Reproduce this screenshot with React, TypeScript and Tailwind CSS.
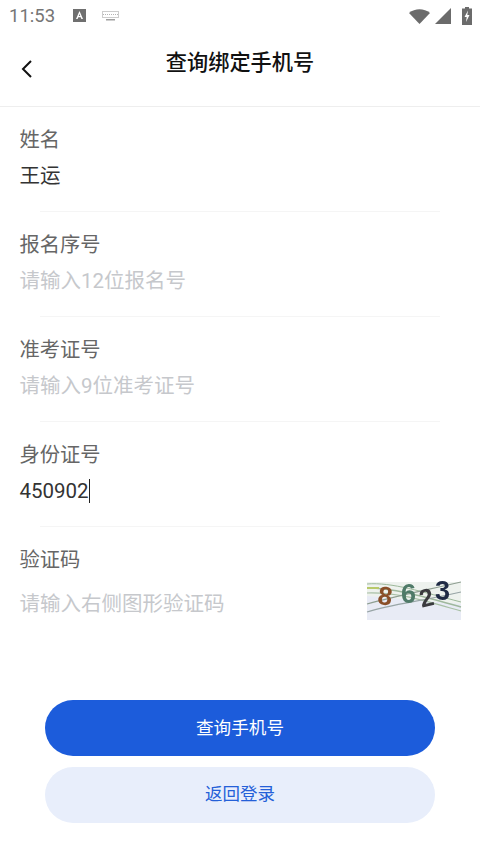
import React from "react";

const cjk = "font-['Roboto','Noto_Sans_CJK_SC',sans-serif]";

function Field({ label, value, placeholder, caret, line = true }: { label: string; value?: string; placeholder?: string; caret?: boolean; line?: boolean }) {
  return (
    <div className="h-[105px] pl-[19.5px] pr-5 pt-[18px] flex flex-col relative">
      <div className="text-[20.3px] leading-[30px] text-[#666666]">{label}</div>
      <div className={`mt-[6px] text-[20.5px] leading-[30px] flex items-center ${value ? "text-[#333333]" : "text-[#c6c8cc]"}`}>
        {value ?? placeholder}
        {caret && <span className="w-[1.5px] h-[24px] bg-[#222222] inline-block" />}
      </div>
      {line && <div className="absolute left-10 right-10 bottom-0 h-px bg-[#f5f5f5]" />}
    </div>
  );
}

function Captcha() {
  return (
    <svg width="94" height="40" viewBox="0 0 94 40" className="block overflow-visible blur-[0.4px]">
      <rect y="2" width="94" height="38" fill="#e8ebf5" />
      <path d="M0 2 H94 V24 L0 16 Z" fill="#eef2ee" />
      <path d="M0 4 C25 2 55 12 94 22" stroke="#9db89a" strokeWidth="1" fill="none" />
      <path d="M0 8 C28 8 58 17 94 27" stroke="#9fb89d" strokeWidth="1.4" fill="none" />
      <path d="M0 13 C30 12 55 20 94 31" stroke="#a9c0a6" strokeWidth="1.2" fill="none" />
      <path d="M0 24 C25 17 50 12 94 2" stroke="#8f9f92" strokeWidth="1.2" fill="none" />
      <path d="M0 32 C25 24 50 22 94 12" stroke="#98a5a6" strokeWidth="1.2" fill="none" />
      <path d="M0 8 H12" stroke="#b8c96a" strokeWidth="2" fill="none" />
      <text x="11" y="25" fontSize="26" fontWeight="700" fill="#8a4f28" transform="rotate(8 20 16)" fontFamily="'Liberation Sans',sans-serif">8</text>
      <text x="34" y="23" fontSize="27" fontWeight="700" fill="#4f7a68" fontFamily="'Liberation Sans',sans-serif">6</text>
      <text x="52" y="26" fontSize="25" fontWeight="700" fill="#3a3a3e" transform="rotate(-14 60 16)" fontFamily="'Liberation Sans',sans-serif">2</text>
      <text x="68" y="20" fontSize="27" fontWeight="700" fill="#1f2a44" fontFamily="'Liberation Sans',sans-serif">3</text>
    </svg>
  );
}

export default function App() {
  return (
    <div className={`w-[480px] h-[853px] bg-white overflow-hidden flex flex-col ${cjk}`}>
      <div className="h-[32px] flex items-center pl-[9px] pr-[8px] text-[#757575] shrink-0">
        <span className="text-[18.5px] leading-none font-['Roboto',sans-serif]">11:53</span>
        <svg width="14" height="14" viewBox="0 0 14 14" className="ml-[18px]">
          <rect width="13" height="13" fill="#6f6f6f" />
          <path d="M6.5 2 L3 10 H4.6 L5.3 8.2 H7.7 L8.4 10 H10 Z M5.8 6.9 L6.5 5 L7.2 6.9 Z" fill="#fff" />
        </svg>
        <svg width="17" height="11" viewBox="0 0 17 11" className="ml-[15px]">
          <rect x="0.5" y="0.5" width="16" height="6" fill="#ffffff" stroke="#9a9a9a" strokeDasharray="1 1" />
          <path d="M1 3.5 H16" stroke="#b5b5b5" strokeDasharray="1 1" />
          <rect x="4" y="8" width="9" height="1.5" fill="#a0a0a0" />
        </svg>
        <div className="ml-auto flex items-center gap-[4px]">
          <svg width="21" height="15" viewBox="0 0 21 15"><path d="M0 4 C6 -1 15 -1 21 4 L10.5 15 Z" fill="#6b6b6b" /></svg>
          <svg width="16" height="16" viewBox="0 0 16 16" className="ml-[1px]"><path d="M16 0 V16 H0 Z" fill="#6b6b6b" /></svg>
          <svg width="10" height="18" viewBox="0 0 10 18" className="ml-[7px]">
            <path d="M3 0 H7 V1.5 H10 V18 H0 V1.5 H3 Z" fill="#6b6b6b" />
            <path d="M6 3.5 L2.5 10 H4.7 L4 15 L7.5 8 H5.3 Z" fill="#fff" />
          </svg>
        </div>
      </div>

      <div className="h-[75px] border-b border-[#eeeeee] shrink-0 relative flex justify-center">
        <svg width="14" height="20" viewBox="0 0 14 20" className="absolute left-[20px] top-[27px]">
          <path d="M11 2 L3 10 L11 18" stroke="#111111" strokeWidth="2" fill="none" />
        </svg>
        <div className="text-[21.2px] leading-[30px] mt-[16px] font-medium text-[#111111]">查询绑定手机号</div>
      </div>

      <Field label="姓名" value="王运" />
      <Field label="报名序号" placeholder="请输入12位报名号" />
      <Field label="准考证号" placeholder="请输入9位准考证号" />
      <Field label="身份证号" value="450902" caret />

      <div className="pl-[19.5px] pr-[19px] pt-[18px] relative">
        <div className="text-[20.3px] leading-[30px] text-[#666666]">验证码</div>
        <div className="flex items-start justify-between mt-[5px]">
          <span className="text-[20.5px] leading-[30px] mt-[9px] text-[#c6c8cc]">请输入右侧图形验证码</span>
          <Captcha />
        </div>
      </div>

      <div className="mt-[80px] px-[45px] flex flex-col gap-[11px]">
        <div className="h-[56px] rounded-full bg-[#1c5cdb] text-white text-[17.6px] flex items-center justify-center">查询手机号</div>
        <div className="h-[56px] rounded-full bg-[#e8eefb] text-[#2460d8] text-[17.5px] pb-[2px] flex items-center justify-center">返回登录</div>
      </div>
    </div>
  );
}
